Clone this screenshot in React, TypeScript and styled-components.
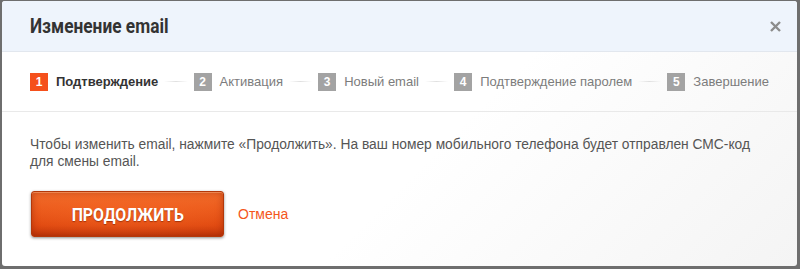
import React from "react";
import styled, { createGlobalStyle } from "styled-components";

const GlobalStyle = createGlobalStyle`
  html, body {
    margin: 0;
    padding: 0;
    background: #6e6e6e;
  }
  body {
    font-family: "Liberation Sans", Arial, sans-serif;
  }
`;

const Backdrop = styled.div`
  width: 800px;
  height: 269px;
  padding: 1px 3px 0 2px;
  box-sizing: border-box;
`;

const Modal = styled.div`
  height: 265px;
  border-radius: 3px;
  overflow: hidden;
  background: linear-gradient(135deg, #ffffff 55%, #f4f4f4 100%);
  display: flex;
  flex-direction: column;
`;

const Header = styled.div`
  height: 50px;
  flex-shrink: 0;
  background: #eef4fc;
  border-bottom: 1px solid #e2e7ee;
  display: flex;
  align-items: center;
  justify-content: space-between;
  padding: 0 15px 0 28px;
`;

const Title = styled.h2`
  margin: 0;
  font-family: Roboto, "Liberation Sans", Arial, sans-serif;
  font-weight: 700;
  font-size: 20px;
  color: #333;
  transform: scaleX(0.865);
  transform-origin: left center;
`;

const Close = styled.button`
  border: 0;
  background: none;
  padding: 0;
  width: 14px;
  height: 14px;
  display: flex;
  align-items: center;
  justify-content: center;
  cursor: pointer;
`;

const Steps = styled.div`
  height: 59px;
  flex-shrink: 0;
  border-bottom: 1px solid #e9e9e9;
  display: flex;
  align-items: center;
  padding: 0 28px 0 28px;
`;

const Step = styled.div`
  display: flex;
  align-items: center;
  gap: 8px;
  flex-shrink: 0;
`;

const Badge = styled.span<{ $active?: boolean }>`
  width: 18px;
  height: 18px;
  display: inline-flex;
  align-items: center;
  justify-content: center;
  background: ${(p) => (p.$active ? "#f5501c" : "#a3a3a3")};
  color: #fff;
  font-size: 12px;
  font-weight: 700;
`;

const StepLabel = styled.span<{ $active?: boolean }>`
  font-size: 13px;
  color: ${(p) => (p.$active ? "#333" : "#7c7c7c")};
  font-weight: ${(p) => (p.$active ? 700 : 400)};
`;

const Connector = styled.span`
  flex: 1;
  height: 1px;
  margin: 0 6px;
  background: linear-gradient(to right, rgba(225, 225, 225, 0), #e0e0e0 50%, rgba(225, 225, 225, 0));
`;

const Body = styled.div`
  padding: 24px 28px 0 28px;
`;

const Text = styled.p`
  margin: 0;
  font-size: 13.8px;
  line-height: 17px;
  color: #555;
`;

const Actions = styled.div`
  display: flex;
  align-items: center;
  gap: 14px;
  margin-top: 21px;
  padding-left: 1px;
`;

const PrimaryButton = styled.button`
  width: 193px;
  height: 46px;
  border: 1px solid #b3380a;
  border-radius: 3px;
  background:
    radial-gradient(ellipse 75% 70% at 50% 45%, rgba(250, 110, 40, 0.5), rgba(250, 110, 40, 0) 100%),
    linear-gradient(to bottom, #f06c2c 0%, #ea5a1c 35%, #de470f 75%, #c0360a 100%);
  box-shadow: 0 1px 3px rgba(0, 0, 0, 0.45), inset 0 1px 0 rgba(255, 180, 130, 0.5),
    inset 0 0 7px rgba(140, 30, 0, 0.5);
  color: #fff;
  font-family: Roboto, "Liberation Sans", Arial, sans-serif;
  font-weight: 700;
  font-size: 18px;
  text-shadow: 0 1px 1px rgba(120, 30, 0, 0.6);
  cursor: pointer;
  display: flex;
  align-items: center;
  justify-content: center;
`;

const ButtonLabel = styled.span`
  display: inline-block;
  transform: scaleX(0.88);
`;

const CancelLink = styled.a`
  font-size: 14px;
  color: #f4561c;
  text-decoration: none;
  cursor: pointer;
`;

const steps = [
  "Подтверждение",
  "Активация",
  "Новый email",
  "Подтверждение паролем",
  "Завершение",
];

export default function App() {
  return (
    <>
      <GlobalStyle />
      <Backdrop>
        <Modal>
          <Header>
            <Title>Изменение email</Title>
            <Close aria-label="Закрыть">
              <svg width="11" height="11" viewBox="0 0 11 11">
                <path d="M1 1L10 10M10 1L1 10" stroke="#8c8c8c" strokeWidth="2.4" />
              </svg>
            </Close>
          </Header>
          <Steps>
            {steps.map((s, i) => (
              <React.Fragment key={s}>
                {i > 0 && <Connector />}
                <Step>
                  <Badge $active={i === 0}>{i + 1}</Badge>
                  <StepLabel $active={i === 0}>{s}</StepLabel>
                </Step>
              </React.Fragment>
            ))}
          </Steps>
          <Body>
            <Text>
              Чтобы изменить email, нажмите «Продолжить». На ваш номер мобильного телефона будет
              отправлен СМС-код для смены email.
            </Text>
            <Actions>
              <PrimaryButton>
                <ButtonLabel>ПРОДОЛЖИТЬ</ButtonLabel>
              </PrimaryButton>
              <CancelLink>Отмена</CancelLink>
            </Actions>
          </Body>
        </Modal>
      </Backdrop>
    </>
  );
}
